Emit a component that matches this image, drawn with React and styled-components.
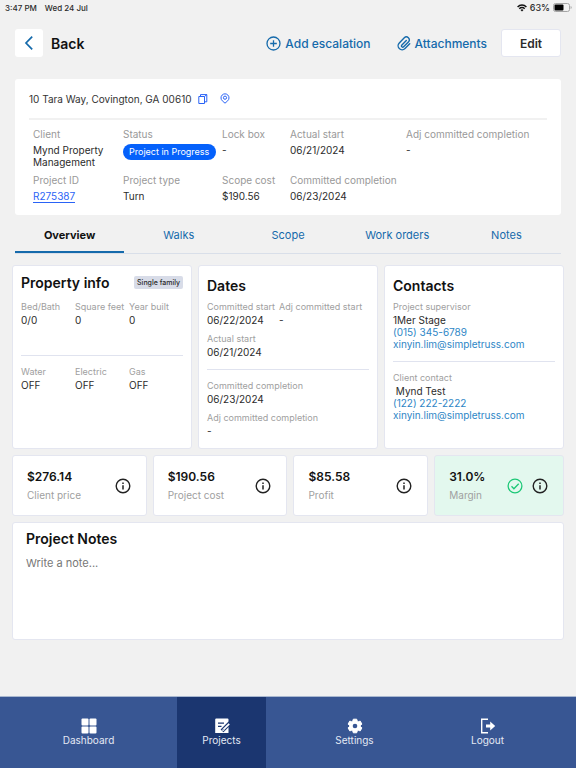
import React, { useState } from 'react';
import styled, { createGlobalStyle } from 'styled-components';

const details = [
    [{ label: 'Client', value: 'Mynd Property Management' }, { label: 'Project ID', value: 'R275387', link: true }],
    [{ label: 'Status', value: 'Project in Progress', badge: true }, { label: 'Project type', value: 'Turn' }],
    [{ label: 'Lock box', value: '-' }, { label: 'Scope cost', value: '$190.56' }],
    [{ label: 'Actual start', value: '06/21/2024' }, { label: 'Committed completion', value: '06/23/2024' }],
    [{ label: 'Adj committed completion', value: '-' }]
]

const tabs = ['Overview', 'Walks', 'Scope', 'Work orders', 'Notes']

const stats = [
    { value: '$276.14', label: 'Client price' },
    { value: '$190.56', label: 'Project cost' },
    { value: '$85.58', label: 'Profit' },
    { value: '31.0%', label: 'Margin', good: true }
]

const App = () => {
    const [tab, setTab] = useState('Overview')
    const [note, setNote] = useState('')

    return (
        <Page>
            <GlobalStyle />
            <StatusBar>
                <StatusGroup><span>3:47 PM</span><span>Wed 24 Jul</span></StatusGroup>
                <StatusIcons><WifiIcon />63%<BatteryIcon /></StatusIcons>
            </StatusBar>
            <Header>
                <BackButton><BackSquare><ChevronIcon /></BackSquare>Back</BackButton>
                <Actions>
                    <ActionButton><PlusCircleIcon />Add escalation</ActionButton>
                    <ActionButton><ClipIcon />Attachments</ActionButton>
                    <EditButton>Edit</EditButton>
                </Actions>
            </Header>

            <Summary>
                <Address>
                    10 Tara Way, Covington, GA 00610
                    <IconButton aria-label="Copy address"><CopyIcon /></IconButton>
                    <IconButton aria-label="Show on map"><PinIcon /></IconButton>
                </Address>
                <Details>
                    {details.map(column => (
                        <DetailColumn key={column[0].label}>
                            {column.map(item => <Detail item={item} key={item.label} />)}
                        </DetailColumn>
                    ))}
                </Details>
            </Summary>

            <Tabs role="tablist">
                {tabs.map(name => (
                    <Tab key={name} role="tab" aria-selected={tab === name} $active={tab === name} onClick={() => setTab(name)}>
                        {name}
                    </Tab>
                ))}
            </Tabs>

            <Content>
                <Cards>
                    <Card>
                        <CardHeader>
                            <CardTitle>Property info</CardTitle>
                            <Tag>Single family</Tag>
                        </CardHeader>
                        <Facts $tall>
                            <Field label="Bed/Bath">0/0</Field>
                            <Field label="Square feet">0</Field>
                            <Field label="Year built">0</Field>
                        </Facts>
                        <Rule />
                        <Facts>
                            <Field label="Water">OFF</Field>
                            <Field label="Electric">OFF</Field>
                            <Field label="Gas">OFF</Field>
                        </Facts>
                    </Card>
                    <Card $low>
                        <CardHeader $low><CardTitle>Dates</CardTitle></CardHeader>
                        <Stack>
                            <Pair>
                                <Field label="Committed start">06/22/2024</Field>
                                <Field label="Adj committed start">-</Field>
                            </Pair>
                            <Field label="Actual start">06/21/2024</Field>
                        </Stack>
                        <Rule />
                        <Stack>
                            <Field label="Committed completion">06/23/2024</Field>
                            <Field label="Adj committed completion">-</Field>
                        </Stack>
                    </Card>
                    <Card $low>
                        <CardHeader $low><CardTitle>Contacts</CardTitle></CardHeader>
                        <Contact label="Project supervisor" name="1Mer Stage" phone="(015) 345-6789" email="xinyin.lim@simpletruss.com" />
                        <Rule />
                        <Contact label="Client contact" name=" Mynd Test" phone="(122) 222-2222" email="xinyin.lim@simpletruss.com" />
                    </Card>
                </Cards>

                <Stats>
                    {stats.map(stat => (
                        <Stat key={stat.label} $good={stat.good}>
                            <div>
                                <StatValue>{stat.value}</StatValue>
                                <StatLabel>{stat.label}</StatLabel>
                            </div>
                            <StatIcons>
                                {stat.good && <CheckIcon />}
                                <IconButton aria-label={`About ${stat.label}`}><InfoIcon /></IconButton>
                            </StatIcons>
                        </Stat>
                    ))}
                </Stats>

                <Notes>
                    <NotesTitle htmlFor="note">Project Notes</NotesTitle>
                    <NotesInput id="note" placeholder="Write a note..." value={note} onChange={e => setNote(e.target.value)} />
                </Notes>
            </Content>

            <BottomNav>
                <NavItem href="#dashboard"><DashboardIcon />Dashboard</NavItem>
                <NavItem href="#projects" $active><ProjectsIcon />Projects</NavItem>
                <NavItem href="#settings"><GearIcon />Settings</NavItem>
                <NavItem href="#logout"><LogoutIcon />Logout</NavItem>
            </BottomNav>
        </Page>
    )
}

export default App;

const Detail = ({ item }) => (
    <DetailItem>
        <DetailLabel>{item.label}</DetailLabel>
        {item.badge && <Badge>{item.value}</Badge>}
        {item.link && <ProjectLink href="#project">{item.value}</ProjectLink>}
        {!item.badge && !item.link && <DetailValue>{item.value}</DetailValue>}
    </DetailItem>
)

const Field = ({ label, children }) => (
    <div>
        <FieldLabel>{label}</FieldLabel>
        <FieldValue>{children}</FieldValue>
    </div>
)

const Contact = ({ label, name, phone, email }) => (
    <ContactBlock>
        <FieldLabel>{label}</FieldLabel>
        <ContactName>{name}</ContactName>
        <ContactLink href={`tel:${phone}`}>{phone}</ContactLink>
        <ContactLink href={`mailto:${email}`}>{email}</ContactLink>
    </ContactBlock>
)

//ICONS//
const WifiIcon = () => (
    <svg width="10" height="8" viewBox="0 0 20 15" fill="none" stroke="#111" strokeWidth="3">
        <path d="M1.2 5.4a12.4 12.4 0 0 1 17.6 0M4.6 9a7.6 7.6 0 0 1 10.8 0" />
        <path d="M10 14.6l-3-3.1a4.3 4.3 0 0 1 6 0z" fill="#111" stroke="none" />
    </svg>
)

const BatteryIcon = () => (
    <svg width="19" height="9" viewBox="0 0 19 9">
        <rect x="0.5" y="0.5" width="16" height="8" rx="2" fill="none" stroke="#a5a5a5" />
        <rect x="1.5" y="1.5" width="9" height="6" rx="1" fill="#000" />
        <path d="M17.6 3v3q1-.4 1-1.5t-1-1.5z" fill="#a5a5a5" />
    </svg>
)

const ChevronIcon = () => (
    <svg width="10" height="14" viewBox="0 0 10 14" fill="none" stroke="#156aab" strokeWidth="1.7">
        <path d="M8.2 0.7L2 7l6.2 6.3" />
    </svg>
)

const PlusCircleIcon = () => (
    <svg width="15" height="15" viewBox="0 0 15 15" fill="none" stroke="#156aab" strokeWidth="1.3">
        <circle cx="7.5" cy="7.5" r="6.5" />
        <path d="M7.5 4.2v6.6M4.2 7.5h6.6" />
    </svg>
)

const ClipIcon = () => (
    <svg width="14" height="15" viewBox="0 0 14 15" fill="none" stroke="#156aab" strokeWidth="1.4" strokeLinecap="round" strokeLinejoin="round">
        <path d="M9.3 4.6L4.9 9.1a1.2 1.2 0 0 0 1.7 1.7l4.8-4.9a2.9 2.9 0 0 0-4.1-4.1L2.3 6.9a4 4 0 0 0 5.7 5.7l4.7-4.8" />
    </svg>
)

const CopyIcon = () => (
    <svg width="10" height="10" viewBox="0 0 10 10" fill="none" stroke="#2a63f6">
        <path d="M0.8 2.5h5.7v7H0.8z" />
        <path d="M2.5 2.5V0.6h6.3v7.2H6.5M6.5 2.5l2.3-1.9" />
    </svg>
)

const PinIcon = () => (
    <svg width="10" height="11" viewBox="0 0 10 11" fill="none" stroke="#2a63f6">
        <path d="M5 10.2L2.3 7.8a4 4 0 1 1 5.4 0z" />
        <circle cx="5" cy="4.7" r="1.6" />
    </svg>
)

const InfoIcon = () => (
    <svg width="16" height="16" viewBox="0 0 16 16" fill="none" stroke="#222" strokeWidth="1.4">
        <circle cx="8" cy="8" r="6.8" />
        <path d="M8 7.2v4.3M8 4.4v1.5" strokeWidth="1.5" />
    </svg>
)

const CheckIcon = () => (
    <svg width="16" height="16" viewBox="0 0 16 16" fill="none" stroke="#1dc877" strokeWidth="1.3">
        <circle cx="8" cy="8" r="6.9" />
        <path d="M4.5 8.3l2.4 2.4 4.8-5" />
    </svg>
)

const DashboardIcon = () => (
    <svg width="16" height="16" viewBox="0 0 16 16" fill="#fff">
        <rect x="0.5" y="0.5" width="7" height="7" rx="1" />
        <rect x="8.5" y="0.5" width="7" height="7" rx="1" />
        <rect x="0.5" y="8.5" width="7" height="7" rx="1" />
        <rect x="8.5" y="8.5" width="7" height="7" rx="1" />
    </svg>
)

const ProjectsIcon = () => (
    <svg width="16" height="16" viewBox="0 0 16 16" fill="none">
        <path d="M2.2 0.5h11.3a1 1 0 0 1 1 1V15H1.2V1.5a1 1 0 0 1 1-1z" fill="#fff" />
        <path d="M4 5.2h6M4 8.4h3.5" stroke="#1b3670" strokeWidth="1.3" />
        <path d="M16 4.8L8 12.8" stroke="#1b3670" strokeWidth="4" />
        <path d="M15.2 5.8L9.6 11.4" stroke="#fff" strokeWidth="1.8" />
        <path d="M8.2 13.2l.5-2.4 1.8 1.8z" fill="#fff" />
    </svg>
)

const GearIcon = () => (
    <svg width="16" height="16" viewBox="0 0 16 16">
        <path d="M6.3 1.2h3.4l.5 1.9 1.1.6 1.9-.6 1.7 3-1.4 1.3v1.2l1.4 1.3-1.7 3-1.9-.6-1.1.6-.5 1.9H6.3l-.5-1.9-1.1-.6-1.9.6-1.7-3 1.4-1.3V7.4L1.1 6.1l1.7-3 1.9.6 1.1-.6z" fill="#fff" stroke="#fff" strokeLinejoin="round" />
        <circle cx="8" cy="8" r="2.3" fill="#385693" />
    </svg>
)

const LogoutIcon = () => (
    <svg width="16" height="16" viewBox="0 0 16 16" fill="none">
        <path d="M8 1.2H1.7v13.6H8" stroke="#fff" strokeWidth="1.4" />
        <path d="M6 6.6h4.2V3.4L15.2 8l-5 4.6V9.4H6z" fill="#fff" />
    </svg>
)

//CSS//
const GlobalStyle = createGlobalStyle`
* {
    box-sizing: border-box;
}

body {
    margin: 0;
    background-color: #f1f1f1;
    color: #2b2b2b;
    font-family: Inter, "Liberation Sans", sans-serif;
    font-size: 10px;
}

button, textarea {
    font-family: inherit;
    color: inherit;
    border: none;
    background: none;
    padding: 0;
}

button {
    cursor: pointer;
}

a {
    text-decoration: none;
}

svg {
    display: block;
    flex-shrink: 0;
}
`

const Page = styled.div`
min-height: 100vh;
display: flex;
flex-direction: column;
`

const StatusBar = styled.div`
height: 15px;
display: flex;
justify-content: space-between;
align-items: center;
padding: 0 4px 0 5px;
font-size: 9px;
font-weight: 500;
`

const StatusGroup = styled.div`
display: flex;
gap: 8px;
font-size: 8px;
`

const StatusIcons = styled.div`
display: flex;
align-items: center;
gap: 3px;
`

const Header = styled.header`
display: flex;
justify-content: space-between;
align-items: center;
padding: 14px 15px 22px;
`

const BackButton = styled.button`
display: flex;
align-items: center;
gap: 8px;
font-size: 14px;
font-weight: 600;
color: #111;
`

const BackSquare = styled.span`
width: 28px;
height: 28px;
display: flex;
align-items: center;
justify-content: center;
background-color: #fff;
border-radius: 3px;
`

const Actions = styled.div`
display: flex;
align-items: center;
`

const ActionButton = styled.button`
display: flex;
align-items: center;
gap: 4px;
margin-right: 26px;
font-size: 12px;
font-weight: 500;
color: #156aab;

& + & {
    margin-right: 14px;
}
`

const EditButton = styled.button`
width: 60px;
height: 28px;
background-color: #fff;
border: 1px solid #e4e6f0;
border-radius: 3px;
font-size: 12px;
font-weight: 600;
`

const Summary = styled.section`
margin: 0 15px;
padding: 0 14px 12px;
background-color: #fff;
border-radius: 3px;
`

const IconButton = styled.button`
display: flex;
`

const Address = styled.div`
height: 41px;
display: flex;
align-items: center;
border-bottom: 2px solid #f1f1f1;
color: #333;

${IconButton} {
    margin-left: 6px;
}

${IconButton} + ${IconButton} {
    margin-left: 12px;
}
`

const Details = styled.div`
display: grid;
grid-template-columns: minmax(0, 90fr) minmax(0, 99fr) minmax(0, 68fr) minmax(0, 116fr) minmax(0, 141fr);
padding: 7px 0 0 4px;
`

const DetailColumn = styled.div`
display: flex;
flex-direction: column;
`

const DetailItem = styled.div`
min-height: 46px;
display: flex;
flex-direction: column;
align-items: flex-start;

& + & {
    min-height: 0;
}
`

const DetailLabel = styled.div`
line-height: 14px;
margin-bottom: 3px;
font-size: 10px;
color: #999;
white-space: nowrap;
`

const DetailValue = styled.div`
line-height: 12px;
font-size: 10px;
`

const ProjectLink = styled.a`
line-height: 12px;
font-size: 10px;
color: #2a63f6;
border-bottom: 1px solid #2a63f6;
`

const Badge = styled.div`
width: 93px;
line-height: 16px;
padding-left: 6px;
border-radius: 8px;
background-color: #0561fb;
color: #fff;
font-size: 9px;
white-space: nowrap;
`

const Tabs = styled.div`
display: flex;
margin: 0 15px;
border-bottom: 1px solid #d9dfe9;
`

const Tab = styled.button`
flex: 1;
height: 38px;
padding-top: 4px;
border-bottom: 2px solid ${props => props.$active ? '#156aab' : 'transparent'};
font-size: 11px;
font-weight: ${props => props.$active ? 700 : 400};
color: ${props => props.$active ? '#111' : '#156aab'};
`

const Content = styled.main`
flex: 1;
display: flex;
flex-direction: column;
gap: 6px;
padding: 11px 12px 56px;
`

const Cards = styled.div`
display: grid;
grid-template-columns: repeat(3, 1fr);
gap: 6px;
`

const Card = styled.section`
min-height: 184px;
padding: ${props => props.$low ? '9px' : '6px'} 8px 8px;
background-color: #fff;
border: 1px solid #e4e6f0;
border-radius: 3px;
`

const CardHeader = styled.div`
height: 20px;
display: flex;
justify-content: space-between;
align-items: center;
margin-bottom: ${props => props.$low ? '5px' : '8px'};
`

const CardTitle = styled.h2`
margin: 0;
font-size: 14px;
font-weight: 600;
color: #111;
`

const Tag = styled.span`
padding: 0 3px;
line-height: 13px;
border-radius: 2px;
background-color: #d8dce8;
font-size: 7px;
font-weight: 500;
`

const Facts = styled.div`
display: grid;
grid-template-columns: repeat(3, minmax(0, 1fr));
min-height: ${props => props.$tall ? '46px' : '0'};
`

const Stack = styled.div`
display: flex;
flex-direction: column;
gap: 4px;
`

const Pair = styled.div`
display: flex;
gap: 4px;
`

const Rule = styled.hr`
margin: 9px 0;
border: none;
border-top: 1px solid #e0e3ef;
`

const FieldLabel = styled.div`
line-height: 13px;
font-size: 9px;
color: #a0a0a0;
white-space: nowrap;
`

const FieldValue = styled.div`
line-height: 15px;
font-size: 10px;
`

const ContactBlock = styled.div`
padding-bottom: 2px;
`

const ContactName = styled.div`
padding-top: 1px;
line-height: 12px;
font-size: 10px;
white-space: pre;
`

const ContactLink = styled.a`
display: block;
line-height: 12px;
font-size: 10px;
color: #2e86c6;
`

const Stats = styled.div`
display: grid;
grid-template-columns: repeat(3, 135fr) 130fr;
gap: 6px;
`

const Stat = styled.section`
height: 61px;
display: flex;
justify-content: space-between;
align-items: center;
padding: 0 15px 0 14px;
background-color: ${props => props.$good ? '#e3f8ee' : '#fff'};
border: 1px solid #e4e6f0;
border-radius: 3px;
`

const StatValue = styled.div`
line-height: 18px;
font-size: 12px;
font-weight: 600;
color: #111;
`

const StatLabel = styled.div`
line-height: 18px;
font-size: 10px;
color: #a0a0a0;
`

const StatIcons = styled.div`
display: flex;
gap: 9px;
`

const Notes = styled.section`
height: 118px;
display: flex;
flex-direction: column;
padding: 6px 13px;
background-color: #fff;
border: 1px solid #e4e6f0;
border-radius: 3px;
`

const NotesTitle = styled.label`
line-height: 20px;
font-size: 14px;
font-weight: 600;
color: #111;
`

const NotesInput = styled.textarea`
flex: 1;
padding-top: 6px;
resize: none;
outline: none;
line-height: 16px;
font-size: 11px;

&::placeholder {
    color: #777;
}
`

const BottomNav = styled.nav`
height: 72px;
display: flex;
justify-content: space-evenly;
border-top: 1px solid #a9b8d0;
background-color: #385693;
`

const NavItem = styled.a`
width: 89px;
display: flex;
flex-direction: column;
align-items: center;
justify-content: center;
padding-bottom: 2px;
background-color: ${props => props.$active ? '#1b3670' : 'transparent'};
color: #e4e9f4;
font-size: 10px;
`
